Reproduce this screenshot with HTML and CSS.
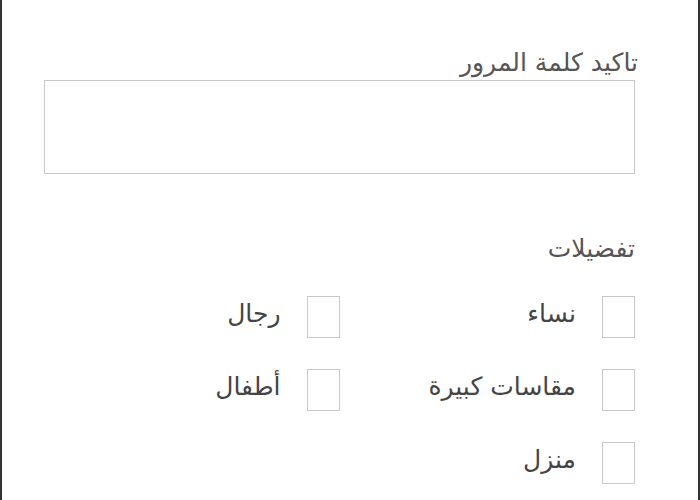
FILE: index.html
```html
<!DOCTYPE html>
<html lang="ar" dir="rtl">
<head>
<meta charset="utf-8">
<link rel="stylesheet" href="styles.css">
</head>
<body>
<div class="frame">
  <form class="form">
    <label class="field-label">تاكيد كلمة المرور</label>
    <div class="text-input"></div>
    <div class="section-title">تفضيلات</div>
    <div class="options">
      <label class="option"><span class="box"></span><span class="opt-text">نساء</span></label>
      <label class="option"><span class="box"></span><span class="opt-text">رجال</span></label>
      <label class="option"><span class="box"></span><span class="opt-text">مقاسات كبيرة</span></label>
      <label class="option"><span class="box"></span><span class="opt-text">أطفال</span></label>
      <label class="option"><span class="box"></span><span class="opt-text">منزل</span></label>
    </div>
  </form>
</div>
</body>
</html>
```

FILE: styles.css
```css
html, body {
  margin: 0;
  padding: 0;
  background: #fff;
}
.frame {
  width: 700px;
  height: 500px;
  box-sizing: border-box;
  border-left: 2px solid #333;
  border-right: 2px solid #333;
  overflow: hidden;
}
.form {
  direction: rtl;
  padding: 46px 63px 0 42px;
  font-family: "DejaVu Sans", sans-serif;
  color: #555;
}
.field-label {
  display: block;
  font-size: 25px;
  line-height: 34px;
  margin-right: -3px;
}
.text-input {
  height: 92px;
  border: 1px solid #c8c8c8;
}
.section-title {
  margin-top: 58px;
  font-size: 25px;
  line-height: 34px;
}
.options {
  margin-top: 30px;
  display: grid;
  grid-template-columns: 1fr 1fr;
  row-gap: 31px;
}
.option {
  display: flex;
  align-items: center;
  gap: 26px;
}
.box {
  width: 31px;
  height: 40px;
  border: 1px solid #c8c8c8;
  flex: none;
}
.opt-text {
  font-size: 25px;
  color: #444;
  margin-bottom: 8px;
}
```
